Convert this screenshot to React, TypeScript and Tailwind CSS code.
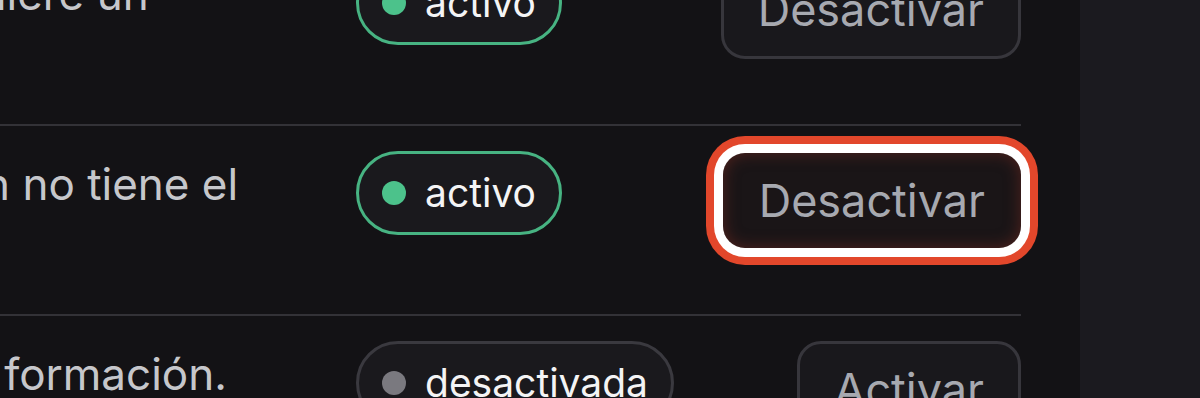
import React from "react";

type Status = "activo" | "desactivada";

interface Row {
  lines: string[];
  status: Status;
  focused?: boolean;
}

const rows: Row[] = [
  { lines: ["Acción que requiere un", "código."], status: "activo" },
  { lines: ["Este usuario aún no tiene el", "rol."], status: "activo", focused: true },
  { lines: ["Contenido de la formación."], status: "desactivada" },
];

const StatusBadge = ({ status }: { status: Status }) => {
  const on = status === "activo";
  return (
    <span
      className={
        on
          ? "inline-flex h-[84px] items-center gap-[19px] rounded-full border-[3px] border-[#47b382] bg-[#1a191d] px-[23px] text-[39px] text-[#f4f4f5]"
          : "inline-flex h-[84px] items-center gap-[19px] rounded-full border-[3px] border-[#3a393f] bg-[#1a191d] px-[23px] text-[39px] text-[#f4f4f5]"
      }
    >
      <span
        className={
          on
            ? "h-[24px] w-[24px] rounded-full bg-[#4cc28b]"
            : "h-[24px] w-[24px] rounded-full bg-[#7a797f]"
        }
      />
      {status}
    </span>
  );
};

const ActionButton = ({ active, focused }: { active: boolean; focused?: boolean }) => {
  const label = active ? "Desactivar" : "Activar";
  if (focused) {
    return (
      <button className="mt-[2px] h-[95px] rounded-[22px] bg-[#1a1517] px-[36px] text-[45px] text-[#a7a9b0] shadow-[inset_0_0_16px_rgba(130,45,35,0.55),0_0_0_9px_#ffffff,0_0_0_17px_#e2472b]">
        {label}
      </button>
    );
  }
  return (
    <button className="h-[98px] rounded-[24px] border-[3px] border-[#37363c] bg-[#19181c] px-[34px] text-[45px] text-[#a7a9b0]">
      {label}
    </button>
  );
};

export default function App() {
  return (
    <div className="flex h-[398px] w-[1200px] overflow-hidden bg-[#131215] font-['Inter','Noto_Sans',sans-serif]">
      <div className="w-[1080px] shrink-0 pr-[59px]">
        <div className="-mt-[64px]">
          {rows.map((row, i) => (
            <div
              key={i}
              className="flex items-start border-b-2 border-[#333237] pt-[25px] pb-[31px]"
            >
              <div className="w-[356px] shrink-0">
                <div className="-ml-[335px] whitespace-nowrap text-[44px] leading-[66px] text-[#c6c7cb]">
                  {row.lines.map((line, j) => (
                    <div key={j}>{line}</div>
                  ))}
                </div>
              </div>
              <div className="flex-1">
                <StatusBadge status={row.status} />
              </div>
              <ActionButton active={row.status === "activo"} focused={row.focused} />
            </div>
          ))}
        </div>
      </div>
      <div className="flex-1 bg-[#1b1a1f]" />
    </div>
  );
}
